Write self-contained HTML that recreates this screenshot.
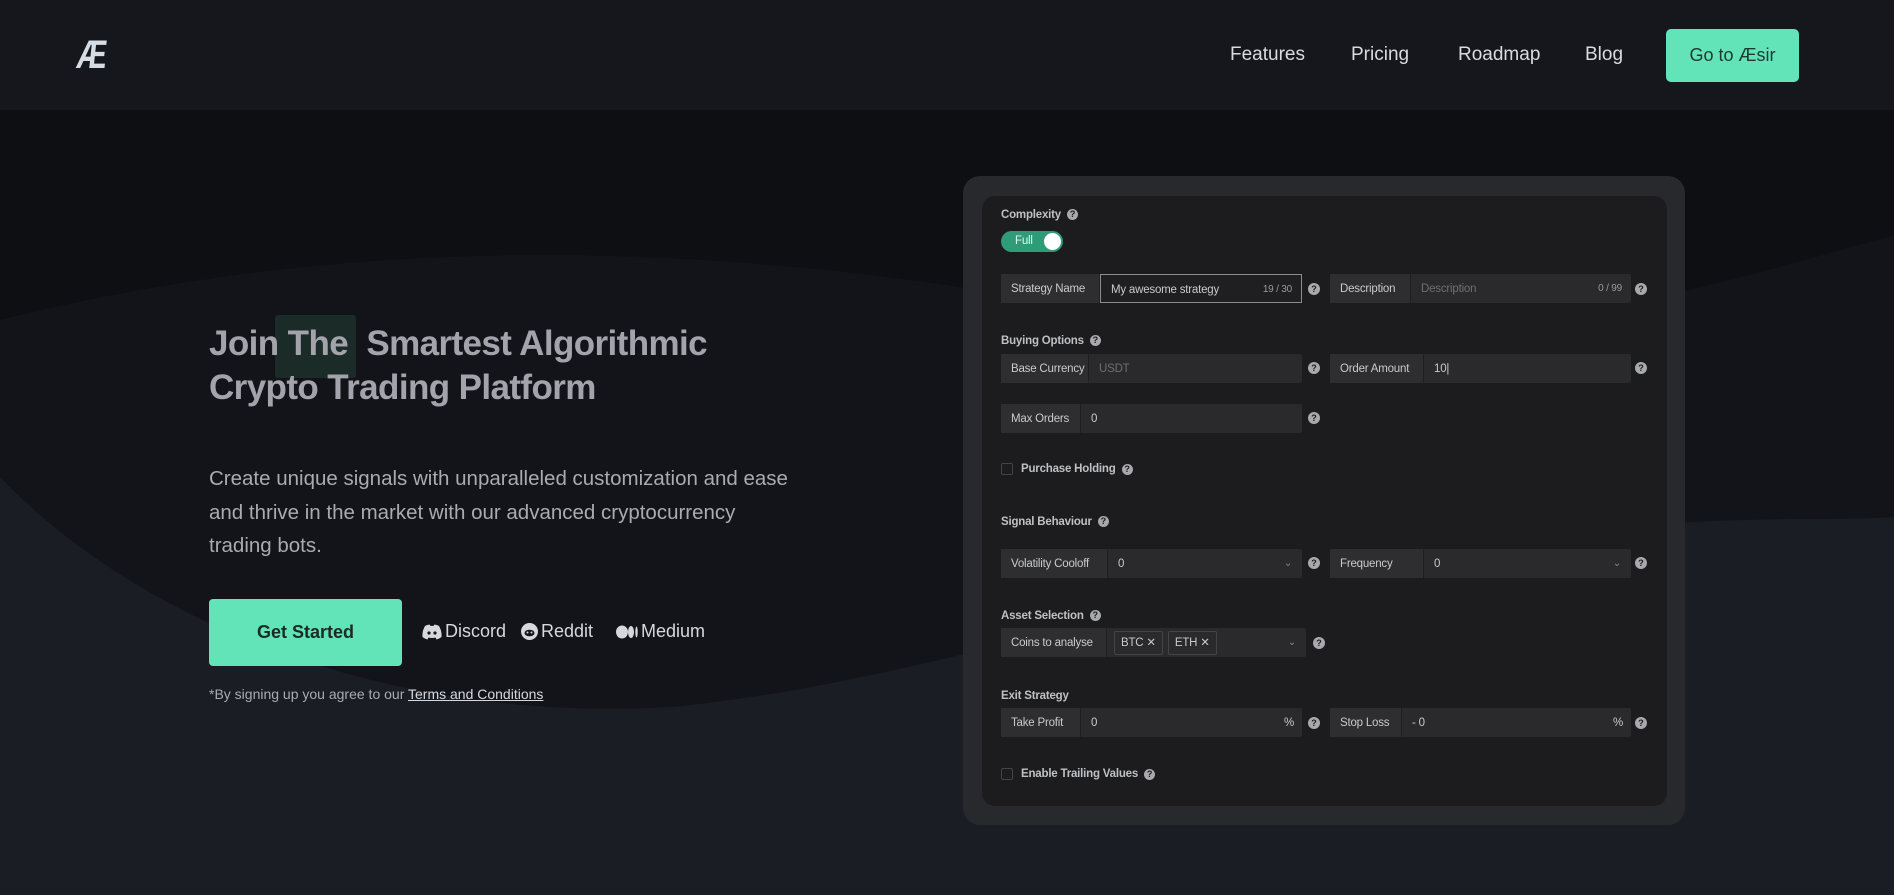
<!DOCTYPE html>
<html><head><meta charset="utf-8"><style>
*{box-sizing:border-box;margin:0;padding:0}
body{width:1894px;height:895px;overflow:hidden;background:#0e0f13;font-family:"Liberation Sans",sans-serif;position:relative}
.hdr{position:absolute;left:0;top:0;width:1894px;height:110px;background:#16171c;z-index:2}
.logo{position:absolute;left:77px;top:33px;font-size:40px;font-weight:bold;color:#d6dce6;letter-spacing:-2px;transform:scaleX(.75) skewX(-8deg);transform-origin:left}
.nav{position:absolute;top:44px;font-size:19px;color:#d8dbe0}
.go{position:absolute;left:1666px;top:29px;width:133px;height:53px;background:#62e3b8;border-radius:5px;color:#1d3a32;font-size:18px;text-align:center;line-height:53px}
svg.bg{position:absolute;left:0;top:0}
h1{position:absolute;left:209px;top:322px;font-size:35px;line-height:44px;color:#a3a3ab;font-weight:bold;letter-spacing:-.6px}
.hl{position:absolute;left:275px;top:315px;width:81px;height:63px;background:#1b2b28;border-radius:3px}
.p{position:absolute;left:209px;top:462px;width:580px;font-size:20.5px;line-height:33.5px;color:#a9abb1}
.gs{position:absolute;left:209px;top:599px;width:193px;height:67px;background:#62e3b8;border-radius:4px;color:#1a2a25;font-weight:bold;font-size:18px;text-align:center;line-height:67px}
.soc{position:absolute;top:621px;font-size:18px;color:#d6d8dd;display:flex;align-items:center;gap:3px}
.terms{position:absolute;left:209px;top:686px;font-size:14px;color:#a9abb1}
.terms u{color:#d6d8dd}
.outer{position:absolute;left:963px;top:176px;width:722px;height:649px;background:#28292c;border-radius:17px}
.inner{position:absolute;left:982px;top:196px;width:685px;height:610px;background:#1c1c1f;border-radius:13px}
.f{position:absolute;font-size:11.5px;color:#c9cacd;white-space:nowrap;letter-spacing:-.2px}
.sec{font-weight:bold;color:#bfc0c4}
.q{display:inline-block;width:11px;height:11px;border-radius:50%;background:#a8a9ad;color:#1c1c1f;font-size:9px;line-height:11px;text-align:center;font-weight:bold;vertical-align:middle;margin-left:6px}
.row{position:absolute;height:29px;background:#2a2a2d;border-radius:2px;display:flex;font-size:11.5px;letter-spacing:-.2px;color:#c9cacd;line-height:30px;white-space:nowrap}
.row .l{background:#2e2e31;padding-left:10px;border-right:1px solid #1f1f22;overflow:hidden}
.row .v{padding-left:10px;flex:1;position:relative}
.qq{position:absolute;width:12px;height:12px;border-radius:50%;background:#a8a9ad;color:#1c1c1f;font-size:9px;line-height:12px;text-align:center;font-weight:bold}
.cb{display:inline-block;width:12px;height:12px;border:1px solid #444;border-radius:2px;vertical-align:middle;margin-right:8px}
.chev{position:absolute;right:10px;top:0;color:#888;font-size:10px}
.tag{display:inline-block;height:24px;line-height:22px;border:1px solid #444;border-radius:2px;padding:0 6px;margin-top:2.5px;margin-right:5px;font-size:11.5px}
</style></head><body>
<svg class="bg" width="1894" height="895" viewBox="0 0 1568 741" preserveAspectRatio="none">
<rect width="1568" height="741" fill="#0e0f13"/>
<path d="M0,265 C300,190 600,200 900,255 C1200,310 1400,240 1568,195 L1568,741 L0,741Z" fill="#121419"/>
<path d="M0,395 C120,520 330,600 560,585 C800,560 1000,470 1300,440 C1450,425 1520,432 1568,428 L1568,741 L0,741Z" fill="#1a1d24"/>
</svg>
<div class="hdr">
<div class="logo">Æ</div>
<div class="nav" style="left:1230px">Features</div>
<div class="nav" style="left:1351px">Pricing</div>
<div class="nav" style="left:1458px">Roadmap</div>
<div class="nav" style="left:1585px">Blog</div>
<div class="go">Go to Æsir</div>
</div>
<div class="hl"></div>
<h1>Join The &nbsp;Smartest Algorithmic<br>Crypto Trading Platform</h1>
<div class="p">Create unique signals with unparalleled customization and ease and thrive in the market with our advanced cryptocurrency<br>trading bots.</div>
<div class="gs">Get Started</div>
<div class="soc" style="left:422px"><svg width="20" height="16" viewBox="0 0 20 16"><path d="M3 2 Q7 0 8 1 L8.5 2 Q10 1.7 11.5 2 L12 1 Q13 0 17 2 Q20 7 19.5 13 Q17 15 14.5 15.5 L13.5 13.5 Q10 14.5 6.5 13.5 L5.5 15.5 Q3 15 0.5 13 Q0 7 3 2Z" fill="#d6d8dd"/><circle cx="7" cy="9" r="1.6" fill="#121419"/><circle cx="13" cy="9" r="1.6" fill="#121419"/></svg>Discord</div>
<div class="soc" style="left:521px"><svg width="17" height="17" viewBox="0 0 17 17"><circle cx="8.5" cy="8.5" r="8.5" fill="#d6d8dd"/><ellipse cx="8.5" cy="10" rx="5" ry="3.3" fill="#121419"/><circle cx="6.5" cy="9.5" r="1" fill="#d6d8dd"/><circle cx="10.5" cy="9.5" r="1" fill="#d6d8dd"/></svg>Reddit</div>
<div class="soc" style="left:616px"><svg width="22" height="14" viewBox="0 0 22 14"><ellipse cx="6" cy="7" rx="6" ry="6.5" fill="#d6d8dd"/><ellipse cx="15" cy="7" rx="3" ry="6" fill="#d6d8dd"/><ellipse cx="20.5" cy="7" rx="1.2" ry="5.5" fill="#d6d8dd"/></svg>Medium</div>
<div class="terms">*By signing up you agree to our <u>Terms and Conditions</u></div>

<div class="outer"></div>
<div class="inner"></div>
<div class="f sec" style="left:1001px;top:209px">Complexity<span class="q">?</span></div>
<div style="position:absolute;left:1001px;top:231px;width:62px;height:21px;border-radius:11px;background:#2f9c78"><span class="f" style="left:14px;top:4px;color:#e8f5ef">Full</span><div style="position:absolute;right:2px;top:2px;width:17px;height:17px;border-radius:50%;background:#fff"></div></div>

<div class="row" style="left:1001px;top:274px;width:301px"><div class="l" style="width:99px">Strategy Name</div><div class="v" style="border:1px solid #8a8b8f;background:#1f1f22">My awesome strategy<span style="position:absolute;right:9px;font-size:10px;color:#999">19 / 30</span></div></div>
<div class="qq" style="left:1308px;top:283px">?</div>
<div class="row" style="left:1330px;top:274px;width:301px"><div class="l" style="width:81px">Description</div><div class="v" style="color:#6e6f73">Description<span style="position:absolute;right:9px;font-size:10px;color:#999">0 / 99</span></div></div>
<div class="qq" style="left:1635px;top:283px">?</div>

<div class="f sec" style="left:1001px;top:335px">Buying Options<span class="q">?</span></div>
<div class="row" style="left:1001px;top:354px;width:301px"><div class="l" style="width:88px">Base Currency</div><div class="v" style="color:#6e6f73">USDT</div></div>
<div class="qq" style="left:1308px;top:362px">?</div>
<div class="row" style="left:1330px;top:354px;width:301px"><div class="l" style="width:94px">Order Amount</div><div class="v">10|</div></div>
<div class="qq" style="left:1635px;top:362px">?</div>

<div class="row" style="left:1001px;top:404px;width:301px"><div class="l" style="width:80px">Max Orders</div><div class="v">0</div></div>
<div class="qq" style="left:1308px;top:412px">?</div>

<div class="f sec" style="left:1001px;top:463px"><span class="cb"></span>Purchase Holding<span class="q">?</span></div>

<div class="f sec" style="left:1001px;top:516px">Signal Behaviour<span class="q">?</span></div>
<div class="row" style="left:1001px;top:549px;width:301px"><div class="l" style="width:107px">Volatility Cooloff</div><div class="v">0<span class="chev">&#8964;</span></div></div>
<div class="qq" style="left:1308px;top:557px">?</div>
<div class="row" style="left:1330px;top:549px;width:301px"><div class="l" style="width:94px">Frequency</div><div class="v">0<span class="chev">&#8964;</span></div></div>
<div class="qq" style="left:1635px;top:557px">?</div>

<div class="f sec" style="left:1001px;top:610px">Asset Selection<span class="q">?</span></div>
<div class="row" style="left:1001px;top:628px;width:305px"><div class="l" style="width:106px">Coins to analyse</div><div class="v" style="padding-left:7px"><span class="tag">BTC ✕</span><span class="tag">ETH ✕</span><span class="chev">&#8964;</span></div></div>
<div class="qq" style="left:1313px;top:637px">?</div>

<div class="f sec" style="left:1001px;top:690px">Exit Strategy</div>
<div class="row" style="left:1001px;top:708px;width:301px"><div class="l" style="width:80px">Take Profit</div><div class="v">0<span style="position:absolute;right:8px">%</span></div></div>
<div class="qq" style="left:1308px;top:717px">?</div>
<div class="row" style="left:1330px;top:708px;width:301px"><div class="l" style="width:72px">Stop Loss</div><div class="v">- 0<span style="position:absolute;right:8px">%</span></div></div>
<div class="qq" style="left:1635px;top:717px">?</div>

<div class="f sec" style="left:1001px;top:768px"><span class="cb"></span>Enable Trailing Values<span class="q">?</span></div>
</body></html>
